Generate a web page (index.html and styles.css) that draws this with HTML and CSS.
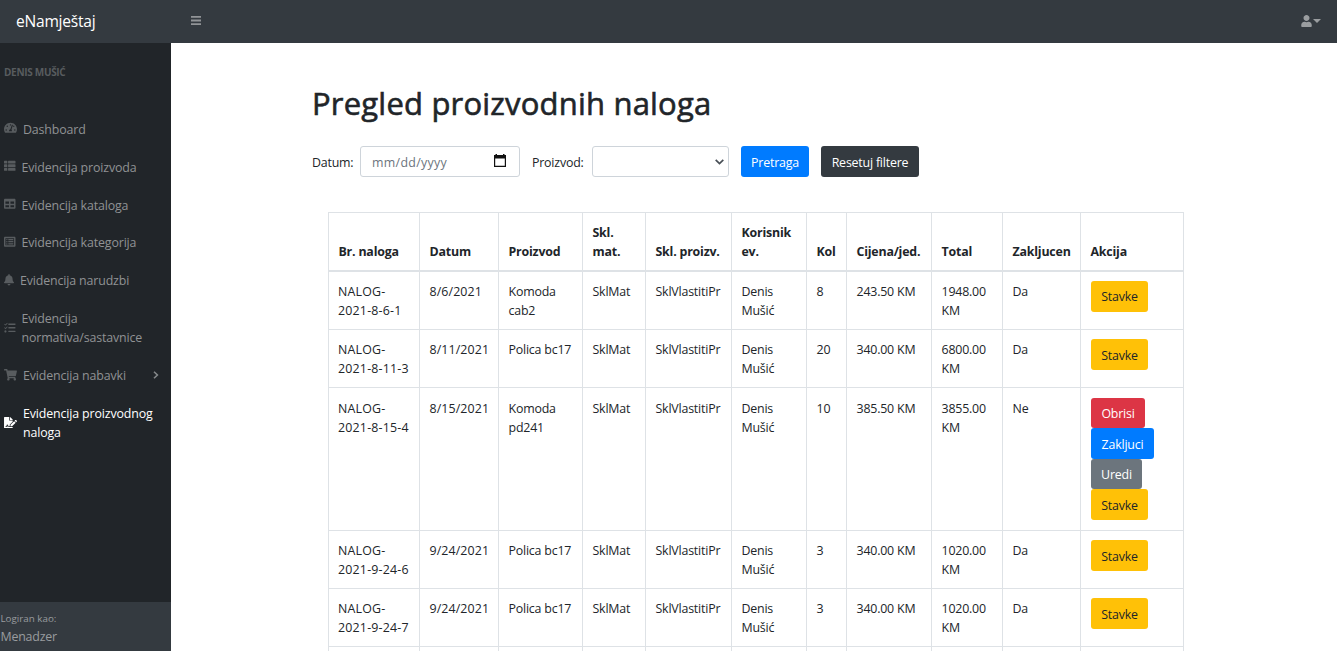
FILE: index.html
```
<!DOCTYPE html>
<html lang="bs">
<head>
<meta charset="utf-8">
<title>eNamještaj</title>
<link rel="stylesheet" href="styles.css">
</head>
<body>
<header class="topnav">
  <a class="brand">eNamještaj</a>
  <svg class="bars" viewBox="0 0 10 9"><path d="M0 0h10v1.8H0zM0 3.6h10v1.8H0zM0 7.2h10V9H0z"/></svg>
  <div class="user">
    <svg class="user-icon" viewBox="0 0 448 512"><path d="M224 256c70.7 0 128-57.3 128-128S294.7 0 224 0 96 57.3 96 128s57.3 128 128 128zm89.6 32h-16.7c-22.2 10.2-46.900 16-72.900 16s-50.6-5.800-72.900-16h-16.700C60.200 288 0 348.200 0 422.400V464c0 26.500 21.500 48 48 48h352c26.500 0 48-21.500 48-48v-41.600c0-74.200-60.200-134.400-134.400-134.400z"/></svg>
    <svg class="caret" viewBox="0 0 8 4"><path d="M0 0h8L4 4z"/></svg>
  </div>
</header>
<div class="shell">
  <aside class="sidenav">
    <div class="menu">
      <div class="heading">DENIS MUŠIĆ</div>
      <a class="link"><svg class="wide" viewBox="0 0 576 512"><path d="M288 32C128.940 32 0 160.940 0 320c0 52.800 14.250 102.260 39.060 144.800 5.610 9.620 16.300 15.200 27.440 15.200h443c11.140 0 21.830-5.580 27.440-15.200C561.750 422.260 576 372.800 576 320c0-159.060-128.940-288-288-288zm0 64c14.710 0 26.580 10.130 30.320 23.650-1.110 2.260-2.640 4.230-3.450 6.670l-9.220 27.670c-5.130 3.490-10.970 6.010-17.640 6.010-17.670 0-32-14.330-32-32S270.330 96 288 96zM96 384c-17.670 0-32-14.330-32-32s14.330-32 32-32 32 14.330 32 32-14.330 32-32 32zm48-160c-17.670 0-32-14.330-32-32s14.330-32 32-32 32 14.330 32 32-14.330 32-32 32zm246.770-72.410l-61.330 184C343.130 347.330 352 364.540 352 384c0 11.720-3.380 22.550-8.880 32H232.880c-5.500-9.450-8.880-20.280-8.880-32 0-33.940 26.500-61.430 59.900-63.590l61.340-184.010c4.170-12.560 17.730-19.450 30.360-15.170 12.570 4.190 19.350 17.790 15.170 30.360zm14.660 57.200l15.520-46.550c3.470-1.290 7.130-2.230 11.050-2.230 17.670 0 32 14.330 32 32s-14.330 32-32 32c-11.380-.01-20.890-6.280-26.570-15.220zM480 384c-17.670 0-32-14.330-32-32s14.330-32 32-32 32 14.330 32 32-14.330 32-32 32z"/></svg><span>Dashboard</span></a>
      <a class="link"><svg viewBox="0 0 512 512"><path d="M24 32h101c13 0 24 11 24 24v80c0 13-11 24-24 24H24c-13 0-24-11-24-24V56c0-13 11-24 24-24zm181 0h283c13 0 24 11 24 24v80c0 13-11 24-24 24H205c-13 0-24-11-24-24V56c0-13 11-24 24-24zM24 192h101c13 0 24 11 24 24v80c0 13-11 24-24 24H24c-13 0-24-11-24-24v-80c0-13 11-24 24-24zm181 0h283c13 0 24 11 24 24v80c0 13-11 24-24 24H205c-13 0-24-11-24-24v-80c0-13 11-24 24-24zM24 352h101c13 0 24 11 24 24v80c0 13-11 24-24 24H24c-13 0-24-11-24-24v-80c0-13 11-24 24-24zm181 0h283c13 0 24 11 24 24v80c0 13-11 24-24 24H205c-13 0-24-11-24-24v-80c0-13 11-24 24-24z"/></svg><span>Evidencija proizvoda</span></a>
      <a class="link"><svg viewBox="0 0 512 512"><path fill-rule="evenodd" d="M48 32h416c26 0 48 22 48 48v352c0 26-22 48-48 48H48c-26 0-48-22-48-48V80c0-26 22-48 48-48zm16 128v96h160v-96zm224 0v96h160v-96zM64 320v96h160v-96zm224 0v96h160v-96z"/></svg><span>Evidencija kataloga</span></a>
      <a class="link"><svg viewBox="0 0 512 512"><path fill-rule="evenodd" d="M48 32h416c26 0 48 22 48 48v352c0 26-22 48-48 48H48c-26 0-48-22-48-48V80c0-26 22-48 48-48zm16 64v320h384V96zm32 64a32 32 0 1 1 64 0 32 32 0 0 1-64 0zm0 96a32 32 0 1 1 64 0 32 32 0 0 1-64 0zm0 96a32 32 0 1 1 64 0 32 32 0 0 1-64 0zm96-224h224v56H192zm0 96h224v56H192zm0 96h224v56H192z"/></svg><span>Evidencija kategorija</span></a>
      <a class="link"><svg class="narrow" viewBox="0 0 448 512"><path d="M224 512c35.320 0 63.970-28.650 63.970-64H160.030c0 35.350 28.650 64 63.970 64zm215.390-149.710c-19.320-20.760-55.470-51.990-55.470-154.290 0-77.700-54.480-139.900-127.940-155.160V32c0-17.670-14.320-32-31.980-32s-31.980 14.330-31.980 32v20.840C118.560 68.100 64.080 130.300 64.080 208c0 102.300-36.150 133.530-55.470 154.290-6 6.450-8.660 14.160-8.610 21.710.11 16.400 12.980 32 32.100 32h383.800c19.120 0 32-15.600 32.100-32 .05-7.550-2.610-15.270-8.610-21.710z"/></svg><span>Evidencija narudzbi</span></a>
      <a class="link"><svg viewBox="0 0 512 512"><path d="M139 38l-72 72-38-37-24 23 62 62 96-96zM139 198l-72 72-38-37-24 23 62 62 96-96zM64 368a48 48 0 1 0 .1 0zM208 64h288q16 0 16 16v32q0 16-16 16H208q-16 0-16-16V80q0-16 16-16zm0 160h288q16 0 16 16v32q0 16-16 16H208q-16 0-16-16v-32q0-16 16-16zm0 160h288q16 0 16 16v32q0 16-16 16H208q-16 0-16-16v-32q0-16 16-16z"/></svg><span>Evidencija<br>normativa/sastavnice</span></a>
      <a class="link"><svg class="wide" viewBox="0 0 576 512"><path d="M528.120 301.319l47.273-208C578.806 78.301 567.391 64 551.990 64H159.208l-9.166-44.810C147.758 8.021 137.930 0 126.529 0H24C10.745 0 0 10.745 0 24v16c0 13.255 10.745 24 24 24h69.883l70.248 343.435C147.325 417.100 136 435.222 136 456c0 30.928 25.072 56 56 56s56-25.072 56-56c0-15.674-6.447-29.835-16.824-40h209.647C430.447 426.165 424 440.326 424 456c0 30.928 25.072 56 56 56s56-25.072 56-56c0-22.172-12.888-41.332-31.579-50.405l5.517-24.276c3.413-15.018-8.002-29.319-23.403-29.319H218.117l-6.545-32h293.145c11.206 0 20.920-7.754 23.403-18.681z"/></svg><span>Evidencija nabavki</span><svg class="angle" viewBox="0 0 6 8"><path d="M1 .7L4.400 4 1 7.300"/></svg></a>
      <a class="link active"><svg class="wide" viewBox="0 0 576 512"><path d="M218.170 424.140c-2.950-5.920-8.090-6.520-10.170-6.520s-7.220.59-10.020 6.190l-7.670 15.340c-6.370 12.780-25.030 11.370-29.480-2.090L144 386.590l-10.610 31.880c-5.890 17.660-22.380 29.530-41 29.530H80c-8.840 0-16-7.160-16-16s7.160-16 16-16h12.390c4.830 0 9.110-3.080 10.640-7.660l18.190-54.640c3.300-9.810 12.440-16.410 22.780-16.410s19.480 6.590 22.770 16.410l13.880 41.640c19.750-16.190 54.060-9.700 66 14.160 1.890 3.780 5.490 5.950 9.360 6.260v-82.120l128-127.090V160H248c-13.200 0-24-10.800-24-24V0H24C10.700 0 0 10.700 0 24v464c0 13.300 10.700 24 24 24h336c13.300 0 24-10.700 24-24v-40l-128-.11c-16.120-.31-30.580-9.280-37.830-23.750zM384 121.900c0-6.300-2.500-12.400-7-16.900L279.100 7c-4.500-4.500-10.600-7-17-7H256v128h128v-6.100zm-96 225.060V416h68.990l161.680-162.780-67.880-67.880L288 346.960zm280.540-179.630l-31.870-31.870c-9.940-9.940-26.070-9.940-36.010 0l-27.250 27.250 67.880 67.880 27.250-27.250c9.950-9.940 9.950-26.070 0-36.010z"/></svg><span>Evidencija proizvodnog<br>naloga</span></a>
    </div>
    <footer class="foot"><div class="small">Logiran kao:</div><div class="role">Menadzer</div></footer>
  </aside>
  <main class="main">
    <h1>Pregled proizvodnih naloga</h1>
    <form class="filters">
      <label class="l-date">Datum:</label>
      <div class="control date"><span>mm/dd/yyyy</span><svg class="calendar" viewBox="0 0 12 13"><path fill-rule="evenodd" d="M1.500 0H3v1h6V0h1.500v1H12v12H0V1h1.500zM1.200 4.500v7.300h9.600V4.500z"/></svg></div>
      <label class="l-prod">Proizvod:</label>
      <div class="control select"><svg class="chevron" viewBox="0 0 9 6"><path d="M.7.800L4.500 4.600 8.300.800"/></svg></div>
      <a class="btn blue b-search">Pretraga</a>
      <a class="btn dark b-reset">Resetuj filtere</a>
    </form>
    <table class="orders">
      <colgroup><col class="c1"><col class="c2"><col class="c3"><col class="c4"><col class="c5"><col class="c6"><col class="c7"><col class="c8"><col class="c9"><col class="c10"><col class="c11"></colgroup>
      <thead><tr><th>Br. naloga</th><th>Datum</th><th>Proizvod</th><th>Skl.<br>mat.</th><th>Skl. proizv.</th><th>Korisnik<br>ev.</th><th>Kol</th><th>Cijena/jed.</th><th>Total</th><th>Zakljucen</th><th>Akcija</th></tr></thead>
      <tbody>
        <tr class="first"><td>NALOG-<br>2021-8-6-1</td><td>8/6/2021</td><td>Komoda<br>cab2</td><td>SklMat</td><td>SklVlastitiPr</td><td>Denis<br>Mušić</td><td>8</td><td>243.50 KM</td><td>1948.00<br>KM</td><td>Da</td><td><div class="actions"><a class="btn yellow">Stavke</a></div></td></tr>
        <tr><td>NALOG-<br>2021-8-11-3</td><td>8/11/2021</td><td>Polica bc17</td><td>SklMat</td><td>SklVlastitiPr</td><td>Denis<br>Mušić</td><td>20</td><td>340.00 KM</td><td>6800.00<br>KM</td><td>Da</td><td><div class="actions"><a class="btn yellow">Stavke</a></div></td></tr>
        <tr class="tall"><td>NALOG-<br>2021-8-15-4</td><td>8/15/2021</td><td>Komoda<br>pd241</td><td>SklMat</td><td>SklVlastitiPr</td><td>Denis<br>Mušić</td><td>10</td><td>385.50 KM</td><td>3855.00<br>KM</td><td>Ne</td><td><div class="actions"><a class="btn red">Obrisi</a><a class="btn blue b-close">Zakljuci</a><a class="btn gray">Uredi</a><a class="btn yellow">Stavke</a></div></td></tr>
        <tr><td>NALOG-<br>2021-9-24-6</td><td>9/24/2021</td><td>Polica bc17</td><td>SklMat</td><td>SklVlastitiPr</td><td>Denis<br>Mušić</td><td>3</td><td>340.00 KM</td><td>1020.00<br>KM</td><td>Da</td><td><div class="actions"><a class="btn yellow">Stavke</a></div></td></tr>
        <tr><td>NALOG-<br>2021-9-24-7</td><td>9/24/2021</td><td>Polica bc17</td><td>SklMat</td><td>SklVlastitiPr</td><td>Denis<br>Mušić</td><td>3</td><td>340.00 KM</td><td>1020.00<br>KM</td><td>Da</td><td><div class="actions"><a class="btn yellow">Stavke</a></div></td></tr>
        <tr class="last"><td></td><td></td><td></td><td></td><td></td><td></td><td></td><td></td><td></td><td></td><td></td></tr>
      </tbody>
    </table>
  </main>
</div>
</body>
</html>
```
FILE: styles.css
```
* { box-sizing: border-box; }
body { margin: 0; height: 651px; overflow: hidden; background: #fff; color: #212529; font: 12.4px/19.2px "Open Sans", "Noto Sans", sans-serif; letter-spacing: -0.2px; }
svg { display: block; flex: none; fill: currentColor; }
.topnav { height: 43px; background: #343a40; display: flex; align-items: center; padding: 0 16px 1px; color: #fff; }
.brand { width: 175px; font-size: 15.6px; letter-spacing: -0.25px; line-height: 24px; }
.bars { width: 10px; height: 9px; color: #919497; margin-bottom: 1px; }
.user { margin-left: auto; display: flex; align-items: center; gap: 1px; color: #9a9da0; }
.user-icon { width: 11px; height: 12px; }
.caret { width: 8px; height: 4px; }
.shell { display: flex; height: 608px; overflow: hidden; }
.sidenav { width: 171px; flex: none; background: #212529; display: flex; flex-direction: column; color: #909294; }
.menu { flex: 1; display: flex; flex-direction: column; }
.heading { font-size: 10px; font-weight: 700; line-height: 14px; color: #585c5f; letter-spacing: -0.3px; padding: 22px 4px 30px; }
.link { display: flex; align-items: center; padding: 9.4px 12px 9.4px 4px; gap: 6.4px; letter-spacing: -0.14px; line-height: 19px; }
.link span { padding-top: 1.2px; margin-bottom: -1px; margin-left: -.4px; }
.link svg { width: 11.5px; height: 11.5px; color: #585c5f; }
.link svg.wide { width: 13px; }
.link svg.narrow { width: 10px; }
.link svg.angle { width: 6px; height: 8px; margin-left: auto; fill: none; stroke: #85888a; stroke-width: 1.6; }
.active, .link.active svg { color: #fff; }
.foot { height: 49px; background: #343a40; color: #999c9f; padding: 8px 0 0 .5px; }
.small { font-size: 9.8px; line-height: 17px; letter-spacing: 0; }
.role { line-height: 19px; }
.main { flex: 1; padding: 41px 0 0 141px; }
h1 { margin: 0; font-size: 31px; line-height: 38px; font-weight: 500; letter-spacing: .2px; -webkit-text-stroke: .6px #212529; }
.filters { display: flex; align-items: center; height: 31px; margin-top: 24px; }
.filters label, .date span { padding-top: 2px; }
.l-date { width: 48px; }
.l-prod { width: 60px; }
.control { height: 31px; border: 1px solid #ced4da; border-radius: 3px; display: flex; align-items: center; justify-content: space-between; }
.date { width: 160px; margin-right: 12px; padding: 0 13px 0 11px; color: #6c757d; }
.date span { letter-spacing: .3px; }
.calendar { width: 12px; height: 13px; color: #111; margin-bottom: 2px; }
.select { width: 137px; margin-right: 12px; padding-right: 4px; justify-content: flex-end; }
.chevron { width: 9px; height: 6px; fill: none; stroke: #495057; stroke-width: 1.7; }
.btn { display: flex; align-items: center; justify-content: center; height: 31px; border-radius: 3px; color: #fff; width: 57px; padding-top: 2px; }
.blue { background: #007bff; }
.dark { background: #343a40; }
.yellow { background: #ffc107; color: #212529; }
.red { background: #dc3545; width: 54px; height: 30px; }
.gray { background: #6c757d; width: 51px; height: 30px; }
.b-search { width: 68px; margin-right: 12px; }
.b-reset { width: 98px; }
.b-close { width: 63px; }
.orders { border-collapse: collapse; table-layout: fixed; width: 856px; margin: 35px 0 0 16px; }
.orders th, .orders td { border: 1px solid #dee2e6; padding: 10px 0 0 9.5px; text-align: left; vertical-align: top; white-space: nowrap; }
.orders th { vertical-align: bottom; padding: 9px 0 8.500px 9.500px; border-bottom-width: 2px; height: 58px; letter-spacing: -0.2px; }
.orders td { height: 58px; }
.orders td:nth-child(-n+2) { letter-spacing: .1px; }
.orders td:nth-child(1) { padding-left: 9px; letter-spacing: .2px; }
.orders .first td { height: 59px; }
.orders .tall td { height: 143px; padding-top: 11px; }
.orders .last td { height: 6px; padding: 0; }
.actions { display: flex; flex-direction: column; margin: -1px 0 0 .5px; }
.c1 { width: 91px; }
.c2 { width: 79px; }
.c3 { width: 84px; }
.c4 { width: 63px; }
.c5 { width: 86px; }
.c6 { width: 75px; }
.c7 { width: 40px; }
.c8 { width: 85px; }
.c9 { width: 71px; }
.c10 { width: 78px; }
.c11 { width: 103px; }
```
